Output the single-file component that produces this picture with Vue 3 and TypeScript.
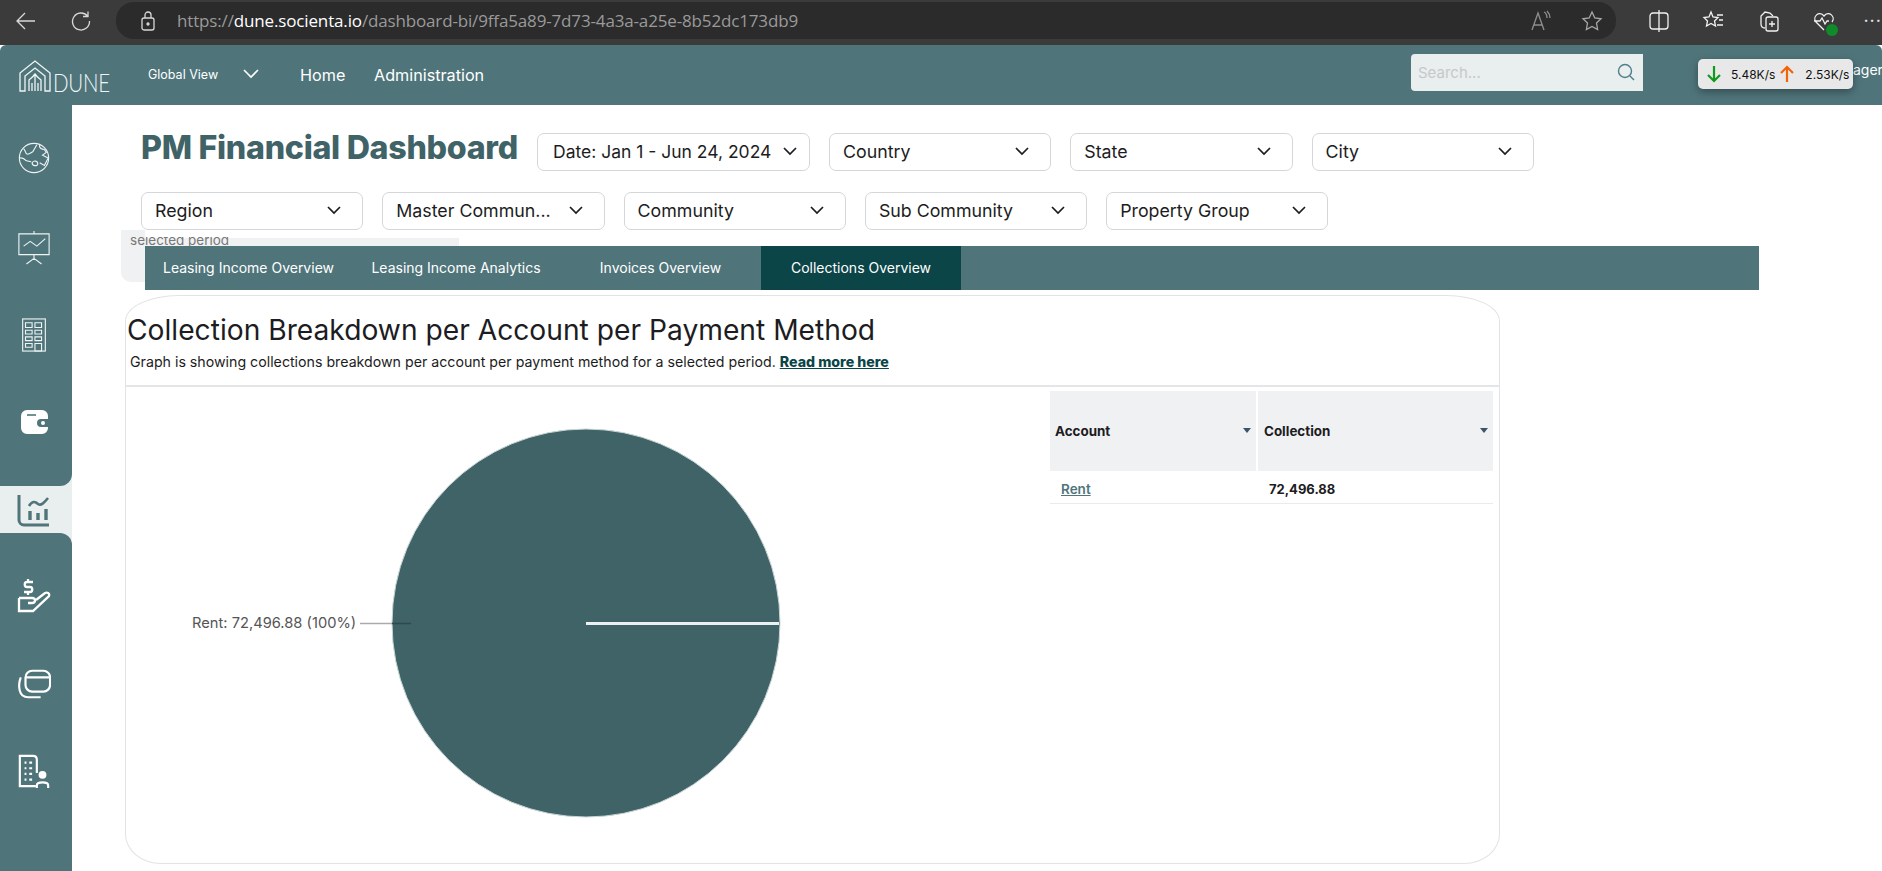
<script setup lang="ts">
const rowOne: string[] = ['Country', 'State', 'City']
const rowTwo: string[] = ['Region', 'Master Commun...', 'Community', 'Sub Community', 'Property Group']
const tabs: { label: string; active: boolean }[] = [
  { label: 'Leasing Income Overview', active: false },
  { label: 'Leasing Income Analytics', active: false },
  { label: 'Invoices Overview', active: false },
  { label: 'Collections Overview', active: true },
]
</script>

<template>
  <div class="page">
    <header class="browser">
      <svg class="bi back" width="22" height="22" viewBox="0 0 22 22"><path d="M20 11H2M10 3l-8 8 8 8" /></svg>
      <svg class="bi reload" width="22" height="22" viewBox="0 0 22 22"><path d="M17.5 6A8.5 8.5 0 1 0 19.5 11M18 1.500V6.500H13" /></svg>
      <div class="address">
        <svg class="bi lock" width="16" height="20" viewBox="0 0 16 20"><rect x="2" y="7" width="12" height="12" rx="2" /><path d="M5 7V4a3 3 0 0 1 6 0v3" /><circle cx="8" cy="13" r="1" fill="#ddd" /></svg>
        <span class="url"><span class="dim">https://</span><span class="host">dune.socienta.io</span><span class="dim">/dashboard-bi/9ffa5a89-7d73-4a3a-a25e-8b52dc173db9</span></span>
        <svg class="bi read" width="24" height="24" viewBox="0 0 24 24"><path d="M3 21 9 4l6 17M5 16h8M15 3c2 1 3 3 3 6M18 2c2 2 3 4 3 7" /></svg>
        <svg class="bi star" width="24" height="24" viewBox="0 0 24 24"><path d="m12 3 2.800 6 6.200.8-4.500 4.300 1.100 6.400-5.600-3.100-5.600 3.100 1.100-6.400L3 9.800 9.200 9z" /></svg>
      </div>
      <div class="tools">
        <svg class="bi white" width="24" height="24" viewBox="0 0 24 24"><rect x="3" y="4" width="18" height="16" rx="3" /><path d="M12 1v22" /></svg>
        <svg class="bi white" width="24" height="24" viewBox="0 0 24 24"><path d="m9 3 2 5 5 .5-3.500 3.500 1 5-4.500-2.500L4.500 17l1-5L2 8.500 7 8zM15 6h6M17 11h4M15 16h6" /></svg>
        <svg class="bi white" width="24" height="24" viewBox="0 0 24 24"><path d="M8 19c-3 0-4-2-4-4V7l4-4 5 1 3 3" /><rect x="9" y="8" width="12" height="14" rx="2" /><path d="M15 12v6M12 15h6" /></svg>
        <span class="heart">
          <svg class="bi white" width="24" height="24" viewBox="0 0 24 24"><path d="M12 21 4 13c-4-5 3-12 8-6 5-6 12 1 8 6M2 12h6l2-3 3 6 2-3h2" /></svg>
          <i class="ok"></i>
        </span>
        <span class="more">···</span>
      </div>
    </header>

    <nav class="topnav">
      <div class="logo">
        <svg width="32" height="32" viewBox="0 0 32 32" fill="none" stroke="#f1f5f5" stroke-width="1.300">
          <path d="M1 31V13L16 1l15 12v18h-5V16l-10-8-10 8v15z" />
          <path d="M10 31V20c2-2 3-2 6-6 3 4 4 4 6 6v11M16 14v17M13 31v-8M19 31v-8" />
        </svg>
        <span>DUNE</span>
      </div>
      <span class="global">Global View</span>
      <svg class="navchev" width="16" height="10" viewBox="0 0 16 10"><path d="m1 1 7 7 7-7" /></svg>
      <a class="navlink home">Home</a>
      <a class="navlink">Administration</a>
      <div class="spacer"></div>
      <div class="search">
        <span>Search...</span>
        <svg width="18" height="18" viewBox="0 0 18 18" fill="none" stroke="#4f7f8c" stroke-width="1.400"><circle cx="8" cy="8" r="6.500" /><path d="m13 13 4 4" /></svg>
      </div>
      <span class="ager">ager</span>
      <div class="speed">
        <svg width="14" height="18" viewBox="0 0 14 18" fill="none" stroke="#0f9a1c" stroke-width="2.200"><path d="M7 1v15M1 10l6 6 6-6" /></svg>
        <span class="rate first">5.48K/s</span>
        <svg width="14" height="18" viewBox="0 0 14 18" fill="none" stroke="#f0640a" stroke-width="2.200"><path d="M7 17V2M1 8l6-6 6 6" /></svg>
        <span class="rate second">2.53K/s</span>
      </div>
    </nav>

    <div class="body">
      <aside class="sidebar">
        <div class="rail upper">
          <span class="slot"><svg class="ic thin" viewBox="0 0 36 36"><circle cx="18" cy="18" r="15.500" /><path d="M7 8c3 3 1 5 4 6 3 0 4-2 6-3l4-7M3 18c3-1 5 1 7 3l5 1M24 4c-1 3 2 5 5 5l2 3-4 3 6 3-4 8-5-3M16 23c2-3 6-2 6 1s-6 3-6-1z" /></svg></span>
          <span class="slot"><svg class="ic thin" viewBox="0 0 36 36"><path d="M18 0v3M2 3h32v22H2zM18 25v4M10 35l8-6 8 6" /><path d="m7 16 7-5 7 5 9-8" /></svg></span>
          <span class="slot"><svg class="ic thin" viewBox="0 0 36 36"><rect x="6" y="1" width="24" height="34" /><path d="M9 5h7v5H9zM19 5h7v5h-7zM9 13h7v4H9zM19 13h7v4h-7zM9 20h7v4H9zM19 20h7v4h-7zM9 27h7v4H9zM19 27h7v8h-7z" /></svg></span>
          <span class="slot"><svg class="wallet" width="27" height="24" viewBox="0 0 27 24"><path fill="#fff" d="M6 0h15a6 6 0 0 1 6 6v3h-7a4 4 0 0 0 0 8h7v1a6 6 0 0 1-6 6H6a6 6 0 0 1-6-6V6a6 6 0 0 1 6-6z" /><path stroke="#4f757b" stroke-width="1.600" fill="none" d="M6 5h9" /><circle cx="22" cy="13" r="2" fill="#fff" /></svg></span>
        </div>
        <div class="active-item">
          <svg class="ic dark" viewBox="0 0 34 34"><path d="M2 2v25a5 5 0 0 0 5 5h25" /><path d="M12 13c3-5 6-5 9-2 3 2 6-1 10-6" stroke-width="2.600" /><path d="M13 18v9M21 20v7M29 16v11" stroke-width="3.400" /></svg>
        </div>
        <div class="rail lower">
          <span class="slot"><svg class="ic bold" viewBox="0 0 34 34"><path d="M2 19h13c4 0 4 5 0 5h-4" /><path d="M2 19v13h14l16-15c1-3-2-4-4-3l-9 7" /><path d="M16 3h-6c-3 0-3 5 0 5h3c3 0 3 5 0 5H7M11 0v3M11 13v3" /></svg></span>
          <span class="slot"><svg class="ic bold" viewBox="0 0 36 36"><rect x="9" y="4" width="26" height="22" rx="7" /><path d="M9 11h26M4 11C1 19 1 33 13 32h12" /></svg></span>
          <span class="slot"><svg class="ic bold" viewBox="0 0 36 36"><path d="M20 33H3V1h14c3 0 4 1 4 4v14M8 8h2M13 8h3M8 14h2M13 14h3M8 20h2M13 20h3M8 26h2M13 26h3" /><circle cx="27" cy="21" r="3" fill="#fff" /><path d="M21 35v-3c0-4 12-4 12 0v3" /></svg></span>
        </div>
      </aside>

      <main class="main">
        <section class="filters first-row">
          <h1>PM Financial Dashboard</h1>
          <button class="select date"><span>Date: Jan 1 - Jun 24, 2024</span><svg class="chev" width="14" height="9" viewBox="0 0 14 9"><path d="m1 1 6 6 6-6" /></svg></button>
          <button v-for="f in rowOne" :key="f" class="select"><span>{{ f }}</span><svg class="chev" width="14" height="9" viewBox="0 0 14 9"><path d="m1 1 6 6 6-6" /></svg></button>
        </section>
        <section class="filters second-row">
          <button v-for="f in rowTwo" :key="f" class="select"><span>{{ f }}</span><svg class="chev" width="14" height="9" viewBox="0 0 14 9"><path d="m1 1 6 6 6-6" /></svg></button>
        </section>

        <div class="tabwrap">
          <div class="ghost"><span class="ghosttext"><span>selected period</span></span></div>
          <div class="tabs">
            <a v-for="t in tabs" :key="t.label" class="tab" :class="{ on: t.active }">{{ t.label }}</a>
          </div>
        </div>

        <article class="card">
          <div class="cardhead">
            <h2>Collection Breakdown per Account per Payment Method</h2>
            <p>Graph is showing collections breakdown per account per payment method for a selected period. <a>Read more here</a></p>
          </div>
          <div class="cardbody">
            <div class="chart">
              <svg width="924" height="477" viewBox="0 0 924 477">
                <circle cx="460" cy="236" r="194" fill="#3f6367" stroke="#c9d6d7" stroke-width="1" />
                <path d="M460 236.500H653" stroke="#eef1f1" stroke-width="3" />
                <path d="M234 236.500H266" stroke="#aaa" stroke-width="1.500" />
                <path d="M266 236.500H285" stroke="#2f4a4d" stroke-width="1.500" />
                <text x="66" y="241" class="pielabel">Rent: 72,496.88 (100%)</text>
              </svg>
            </div>
            <div class="table">
              <div class="th first"><span>Account</span><i class="caret"></i></div>
              <div class="th"><span>Collection</span><i class="caret"></i></div>
              <div class="td first"><a>Rent</a></div>
              <div class="td num">72,496.88</div>
            </div>
          </div>
        </article>
      </main>
    </div>
  </div>
</template>

<style>
html, body { margin: 0; background: #fff; overflow: hidden; }
</style>

<style scoped>
.page { width: 1882px; height: 871px; overflow: hidden; display: flex; flex-direction: column; font-family: Inter, "Liberation Sans", sans-serif; background: #fff; }
button { font-family: inherit; }

/* browser chrome */
.browser { height: 45px; flex: none; background: #3b3b3b; display: flex; align-items: center; box-sizing: border-box; padding-bottom: 4px; }
.bi { fill: none; stroke: #d8d8d8; stroke-width: 1.300; flex: none; }
.bi.white { stroke: #f2f2f2; }
.back { margin-left: 15px; }
.reload { margin-left: 33px; }
.address { margin-left: 24px; width: 1509px; height: 37px; background: #2b2b2b; border-radius: 18px; display: flex; align-items: center; }
.lock { margin-left: 24px; }
.url { margin-left: 21px; font-family: "Open Sans", sans-serif; font-size: 17px; letter-spacing: -0.150px; flex: 1; white-space: nowrap; }
.dim { color: #9a9a9a; }
.host { color: #fff; }
.read { stroke: #8f8f8f; }
.star { stroke: #a8a8a8; margin-left: 27px; margin-right: 12px; }
.tools { display: flex; align-items: center; margin-left: 31px; gap: 31px; }
.heart { position: relative; display: flex; }
.ok { position: absolute; right: -2px; bottom: -3px; width: 12px; height: 12px; border-radius: 50%; background: #108a2a; }
.more { color: #e8e8e8; font-size: 18px; letter-spacing: 1px; margin-left: -4px; white-space: nowrap; }

/* app nav */
.topnav { height: 60px; flex: none; background: #4f757b; border-radius: 6px 6px 0 0; display: flex; align-items: center; color: #fff; position: relative; box-sizing: border-box; }
.logo { display: flex; align-items: flex-end; margin-left: 19px; width: 129px; margin-top: 2px; }
.logo span { font-family: Lato, sans-serif; font-weight: 300; font-size: 25px; line-height: 20px; color: #f1f5f5; margin-left: 2px; letter-spacing: -0.300px; transform: scaleX(.82); transform-origin: left center; }
.global { font-size: 12.500px; width: 95px; margin-top: -2px; white-space: nowrap; }
.navchev { fill: none; stroke: #fff; stroke-width: 1.600; flex: none; margin-right: 41px; margin-top: -2px; }
.navlink { font-size: 16.200px; white-space: nowrap; }
.home { width: 74px; }
.spacer { flex: 1; }
.search { width: 232px; height: 37px; background: #e9eeee; border-radius: 4px 0 0 4px; box-sizing: border-box; padding: 0 8px 0 7px; display: flex; align-items: center; justify-content: space-between; color: #c6c9ca; font-size: 15px; margin-right: 239px; margin-top: -6px; }
.ager { position: absolute; left: 1853px; top: 16px; font-size: 14px; }
.speed { position: absolute; left: 1698px; top: 14px; width: 155px; height: 30px; background: #e8e8e8; border-radius: 5px; box-shadow: 0 3px 8px rgba(0, 0, 0, .35); display: flex; align-items: center; color: #111; font-size: 12px; box-sizing: border-box; padding-left: 9px; }
.rate.first { margin-left: 10px; margin-right: 5px; }
.rate.second { margin-left: 11px; }

/* body */
.body { flex: 1; display: flex; min-height: 0; }
.sidebar { width: 72px; flex: none; display: flex; flex-direction: column; background: #e9eeee; }
.rail { background: #4f757b; display: flex; flex-direction: column; align-items: center; padding-right: 4px; box-sizing: border-box; }
.slot { width: 34px; height: 36px; display: flex; align-items: center; justify-content: center; flex: none; }
.upper { height: 381px; border-bottom-right-radius: 12px; padding-top: 35px; gap: 51px; }
.upper .slot:nth-child(2) { margin-top: 3px; }
.lower { flex: 1; border-top-right-radius: 12px; padding-top: 45px; gap: 52px; }
.active-item { height: 47px; display: flex; align-items: center; justify-content: center; padding-right: 4px; }
.ic { width: 34px; height: 36px; fill: none; stroke: #fff; flex: none; }
.ic.thin { stroke: #eef3f3; stroke-width: 1.200; }
.ic.bold { stroke-width: 2.300; }
.ic.dark { stroke: #4f757b; stroke-width: 3; width: 34px; height: 34px; }

.main { flex: 1; min-width: 0; padding-top: 28px; display: flex; flex-direction: column; }
.filters { display: flex; align-items: center; margin-left: 69px; gap: 19px; height: 38px; }
h1 { margin: 0 0 9px; width: 377px; font-size: 32.200px; font-weight: 800; color: #3f6367; white-space: nowrap; letter-spacing: -0.300px; }
.second-row { margin-top: 21px; }
.select { width: 222.300px; height: 38px; flex: none; background: #fff; border: 1px solid #d4d7da; border-radius: 7px; display: flex; align-items: center; justify-content: space-between; box-sizing: border-box; padding: 0 21px 2px 13px; font-size: 17.800px; color: #1c1c22; white-space: nowrap; }
.select.date { width: 273px; padding: 0 12px 2px 15px; font-size: 17.500px; }
.chev { fill: none; stroke: #1c1c22; stroke-width: 1.700; flex: none; }

.tabwrap { position: relative; margin-top: 16px; margin-left: 73px; width: 1614px; }
.ghost { position: absolute; left: -24px; top: -16px; width: 338px; height: 52px; overflow: hidden; border-bottom-left-radius: 10px; background: linear-gradient(#f0f1f3, #f0f1f3) 0 0 / 24px 100% no-repeat, linear-gradient(#f0f1f3, #f0f1f3) 0 8px / 100% 8px no-repeat; }
.ghosttext { position: absolute; left: 9px; top: 7px; height: 9px; overflow: hidden; font-size: 13.500px; line-height: 10px; color: #777; white-space: nowrap; }
.ghosttext span { display: block; margin-top: -2px; }
.tabs { position: relative; display: grid; grid-template-columns: 207px 208px 201px 200px; height: 44px; background: #4f757b; }
.tab { display: flex; align-items: center; justify-content: center; color: #fff; font-size: 14px; white-space: nowrap; padding-bottom: 1px; box-sizing: border-box; }
.tab.on { background: #0b4547; }

.card { margin-top: 5px; margin-left: 53px; width: 1375px; height: 569px; box-sizing: border-box; border: 1.500px solid #e2e3e5; border-radius: 54px 54px 36px 36px / 26px 26px 30px 30px; display: flex; flex-direction: column; overflow: hidden; }
.cardhead { height: 91px; flex: none; box-sizing: border-box; border-bottom: 2px solid #e4e5e6; padding: 17px 0 0 1px; }
h2 { margin: 0; font-size: 28.200px; font-weight: 400; line-height: 34px; color: #1c1c22; white-space: nowrap; }
.cardhead p { margin: 6px 0 0 3px; font-size: 14.200px; line-height: 18px; color: #1c1c22; white-space: nowrap; }
.cardhead a { font-weight: 800; color: #0b4547; text-decoration: underline; }
.cardbody { flex: 1; display: flex; min-height: 0; }
.chart { width: 924px; flex: none; }
.chart svg { display: block; }
.pielabel { font-size: 14.700px; fill: #555; }
.table { width: 443px; margin-top: 4px; display: grid; grid-template-columns: 207px 236px; grid-template-rows: 80px 33px; align-content: start; }
.th { background: #f0f1f3; display: flex; align-items: center; justify-content: space-between; padding: 0 5px 0 5px; font-size: 13.400px; font-weight: 700; color: #1c1c22; box-sizing: border-box; }
.th.first { margin-right: 1px; }
.th:not(.first) { margin-left: 1px; padding-left: 6px; }
.caret { width: 0; height: 0; border-left: 4.500px solid transparent; border-right: 4.500px solid transparent; border-top: 5px solid #3c5565; margin-top: -1px; }
.td { display: flex; align-items: center; font-size: 13px; border-bottom: 1px solid #e9eaeb; box-sizing: border-box; padding-top: 3px; }
.td.first { padding-left: 11px; font-size: 13.500px; }
.td.first a { color: #4f757b; font-weight: 600; text-decoration: underline; }
.td.num { padding-left: 12px; font-weight: 700; color: #1c1c22; }
</style>
